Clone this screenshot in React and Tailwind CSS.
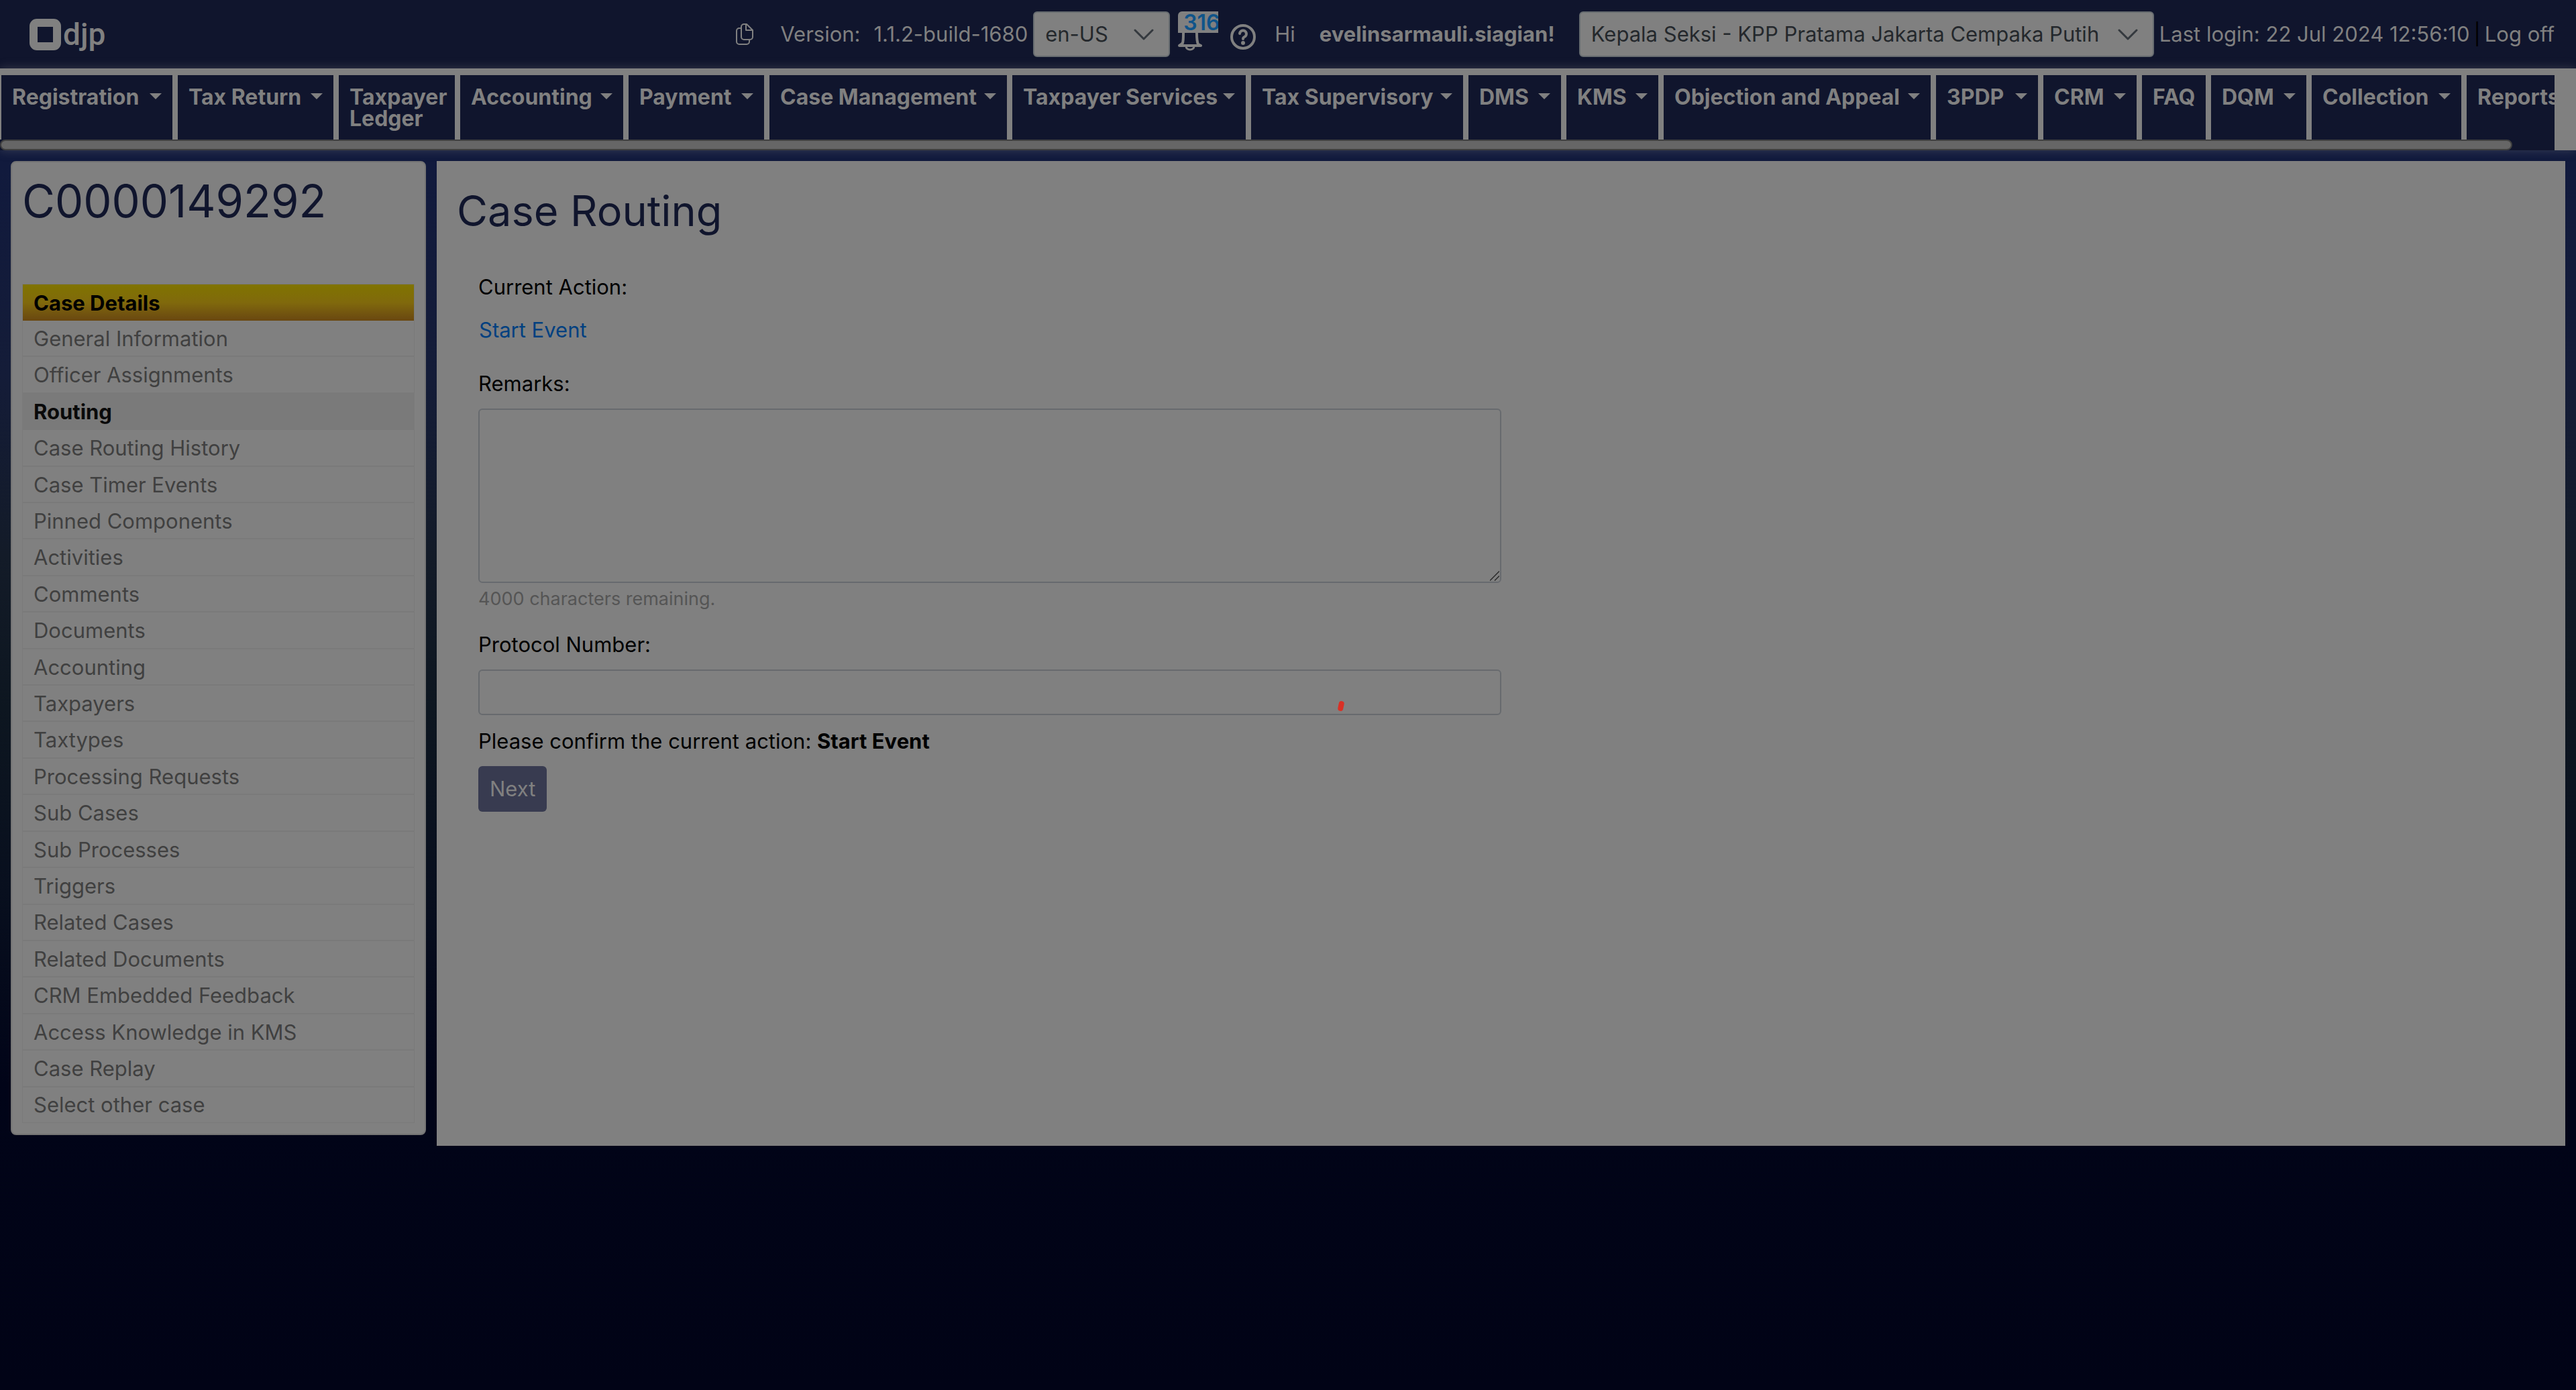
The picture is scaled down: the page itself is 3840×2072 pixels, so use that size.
const NAV = [
  { label: "Registration", width: "w-[255px]", caret: true },
  { label: "Tax Return", width: "w-[232px]", caret: true },
  { label: "Taxpayer Ledger", width: "w-[173px]", caret: false },
  { label: "Accounting", width: "w-[243px]", caret: true },
  { label: "Payment", width: "w-[202px]", caret: true },
  { label: "Case Management", width: "w-[354px]", caret: true },
  { label: "Taxpayer Services", width: "w-[348px]", caret: true },
  { label: "Tax Supervisory", width: "w-[316px]", caret: true },
  { label: "DMS", width: "w-[138px]", caret: true },
  { label: "KMS", width: "w-[137px]", caret: true },
  { label: "Objection and Appeal", width: "w-[398px]", caret: true },
  { label: "3PDP", width: "w-[152px]", caret: true },
  { label: "CRM", width: "w-[139px]", caret: true },
  { label: "FAQ", width: "w-[95px]", caret: false },
  { label: "DQM", width: "w-[142px]", caret: true },
  { label: "Collection", width: "w-[223px]", caret: true },
  { label: "Reports", width: "w-[200px]", caret: true },
];

const MENU = [
  "General Information",
  "Officer Assignments",
  "Routing",
  "Case Routing History",
  "Case Timer Events",
  "Pinned Components",
  "Activities",
  "Comments",
  "Documents",
  "Accounting",
  "Taxpayers",
  "Taxtypes",
  "Processing Requests",
  "Sub Cases",
  "Sub Processes",
  "Triggers",
  "Related Cases",
  "Related Documents",
  "CRM Embedded Feedback",
  "Access Knowledge in KMS",
  "Case Replay",
  "Select other case",
];

function Logo() {
  return (
    <a href="#home" className="flex items-center gap-[3px]" aria-label="djp home">
      <svg width="47" height="47" viewBox="0 0 47 47" aria-hidden="true">
        <path
          fill="#808080"
          fillRule="evenodd"
          d="M11 0H36A11 11 0 0 1 47 11V36A11 11 0 0 1 36 47H11A11 11 0 0 1 0 36V11A11 11 0 0 1 11 0ZM12 12V35H35V12Z"
        />
      </svg>
      <span className="font-['Roboto',sans-serif] text-[46px] font-medium leading-[40px]">djp</span>
    </a>
  );
}

function CopyIcon() {
  return (
    <svg width="26" height="33" viewBox="0 0 26 33" fill="none" stroke="#808080" strokeWidth="2" strokeLinejoin="round" aria-hidden="true">
      <path d="M16 1H12A4 4 0 0 0 8 5V20A4 4 0 0 0 12 24H21A4 4 0 0 0 25 20V10Z" />
      <path d="M15 2V10H25" />
      <path d="M8 7H5A4 4 0 0 0 1 11V27A4 4 0 0 0 5 31H16A4 4 0 0 0 20 27V24" />
    </svg>
  );
}

function BellIcon() {
  return (
    <svg width="36" height="42" viewBox="0 0 36 42" fill="none" stroke="#808080" strokeWidth="4" aria-hidden="true">
      <path d="M7 30C8 26 8 22 8 16A10 10 0 0 1 28 16C28 22 28 27 30 32L34 34H2L5 32Z" strokeLinejoin="round" />
      <path d="M12 35A6 5 0 0 0 24 35" strokeWidth="3" />
    </svg>
  );
}

function HelpIcon() {
  return (
    <svg width="38" height="38" viewBox="0 0 38 38" fill="none" stroke="#808080" aria-hidden="true">
      <circle cx="19" cy="19" r="17" strokeWidth="4" />
      <path d="M14 14A5 5 0 1 1 21 19Q19 20 19 22" strokeWidth="4" strokeLinecap="round" />
      <circle cx="19" cy="28" r="3" fill="#808080" stroke="none" />
    </svg>
  );
}

function Select({ label, value, width }) {
  return (
    <div className={`relative shrink-0 ${width}`}>
      <select
        aria-label={label}
        defaultValue={value}
        className="h-[68px] w-full appearance-none rounded-md border-2 border-[#676c70] bg-[#808080] px-4 text-[31px] text-[#24282c]"
      >
        <option>{value}</option>
      </select>
      <svg
        className="pointer-events-none absolute top-[26px] right-6"
        width="30"
        height="17"
        viewBox="0 0 30 17"
        fill="none"
        stroke="#34393e"
        strokeWidth="3"
        strokeLinecap="round"
        strokeLinejoin="round"
        aria-hidden="true"
      >
        <path d="M2 2L15 15L28 2" />
      </svg>
    </div>
  );
}

function Header() {
  return (
    <header className="flex h-[102px] items-center justify-between bg-[#10152d] pr-8 pl-11 text-[31px] whitespace-nowrap text-[#808080]">
      <Logo />
      <div className="flex items-center">
        <button type="button" aria-label="Copy version">
          <CopyIcon />
        </button>
        <span className="ml-10">Version:</span>
        <span className="mr-2 ml-5">1.1.2-build-1680</span>
        <Select label="Language" value="en-US" width="w-[204px]" />
        <button type="button" aria-label="316 notifications" className="relative ml-3 flex h-[68px] w-[60px] items-center pt-2">
          <BellIcon />
          <span className="absolute top-0 left-0 h-8 w-[60px] overflow-hidden rounded-tl-md bg-[#808080] pl-2 text-left text-[32px] leading-[34px] font-semibold text-[#0f548a]">
            316
          </span>
        </button>
        <button type="button" aria-label="Help" className="mt-2 ml-[18px]">
          <HelpIcon />
        </button>
        <span className="ml-7">Hi</span>
        <a href="#profile" className="mx-9 font-bold">
          evelinsarmauli.siagian!
        </a>
        <Select label="Role" value="Kepala Seksi - KPP Pratama Jakarta Cempaka Putih" width="w-[857px]" />
        <span className="ml-2">Last login: 22 Jul 2024 12:56:10</span>
        <span className="mx-[6px] text-black">|</span>
        <a href="#logoff">Log off</a>
      </div>
    </header>
  );
}

function Nav() {
  return (
    <nav aria-label="Main" className="relative bg-[#808080] pt-[10px] pr-8 shadow-[0_0_14px_rgba(128,128,128,0.35)]">
      <div className="overflow-hidden bg-[#10152d]">
        <ul className="flex h-24 gap-2 bg-[#808080] pl-[2px] text-[32px] leading-8 font-bold text-[#808080]">
          {NAV.map((item) => (
            <li key={item.label} className={`shrink-0 bg-[#10152d] ${item.width}`}>
              <a href={`#${item.label}`} className="flex justify-between px-4 pt-[17px]">
                <span className={item.caret ? "whitespace-nowrap" : ""}>{item.label}</span>
                {item.caret && (
                  <svg className="mt-[10px] shrink-0" width="18" height="9" viewBox="0 0 18 9" aria-hidden="true">
                    <path fill="#808080" d="M0 0H18L9 9Z" />
                  </svg>
                )}
              </a>
            </li>
          ))}
        </ul>
        <div className="h-4">
          <div className="h-4 w-[3745px] max-w-full rounded-full border-2 border-[#404040] bg-[#666666]" />
        </div>
      </div>
    </nav>
  );
}

function Sidebar() {
  return (
    <aside className="w-[619px] shrink-0 rounded-lg border-2 border-[#747474] bg-[#808080] px-[15px] pb-4">
      <h2 className="pt-[23px] text-[67px] leading-[70px] text-[#10152d]">C0000149292</h2>
      <ul className="mt-[88px] flex min-h-[1251px] flex-col border border-[#7a7a7a] text-[31px] text-[#404040]">
        <li className="flex h-[54px] items-center bg-linear-to-b from-[#807400] via-[#80690c] to-[#694710] px-4 pt-[2px] font-bold text-black">
          Case Details
        </li>
        {MENU.map((item) => (
          <li
            key={item}
            className={
              item === "Routing"
                ? "flex flex-1 border-b-2 border-[#7a7a7a] bg-[#7a7a7a] pt-[2px] font-bold text-[#0a0a0a]"
                : "flex flex-1 border-b-2 border-[#7a7a7a] pt-[2px] last:border-b-0"
            }
          >
            <a href={`#${item}`} className="flex flex-1 items-center px-4">
              {item}
            </a>
          </li>
        ))}
      </ul>
    </aside>
  );
}

function RoutingForm() {
  return (
    <main className="flex-1 bg-[#808080] text-[31px] leading-[40px] text-black">
      <h1 className="px-[30px] pt-[38px] text-[63px] leading-[72px] text-[#10152d]">Case Routing</h1>
      <form className="px-[62px] pt-[58px]" onSubmit={(e) => e.preventDefault()}>
        <p>Current Action:</p>
        <a href="#start-event" className="mt-6 ml-[1px] block w-fit text-[#004080]">
          Start Event
        </a>
        <label htmlFor="remarks" className="mt-10 block">
          Remarks:
        </label>
        <div className="relative mt-[17px] w-1/2">
          <textarea id="remarks" className="block h-[260px] w-full resize-none rounded-md border-2 border-[#676a6e] bg-[#808080] p-4" />
          <svg className="pointer-events-none absolute right-[3px] bottom-[3px]" width="14" height="15" viewBox="0 0 14 15" stroke="#2b2b2b" strokeWidth="1.5" aria-hidden="true">
            <path d="M0 14.5L14 0.5M7 14.5L14 7.5" />
          </svg>
        </div>
        <p className="mt-1 text-[27px] text-[#555555]">4000 characters remaining.</p>
        <label htmlFor="protocol" className="mt-7 block">
          Protocol Number:
        </label>
        <div className="relative mt-[17px] w-1/2">
          <input id="protocol" type="text" className="block h-[68px] w-full rounded-md border-2 border-[#676a6e] bg-[#808080] px-4" />
          <span className="absolute right-[235px] bottom-[6px] h-[15px] w-2 rotate-12 rounded-full bg-[#d93025]" />
        </div>
        <p className="mt-[19px]">
          Please confirm the current action: <strong className="font-bold">Start Event</strong>
        </p>
        <button type="submit" className="mt-[17px] h-[68px] rounded-md bg-[#383b50] px-[17px] text-[#808080]">
          Next
        </button>
      </form>
    </main>
  );
}

export default function App() {
  return (
    <div className="min-h-screen bg-[linear-gradient(to_bottom,#111a3d_0%,#111a3d_12%,#141c38_27%,#131b28_40%,#0d1620_51%,#080f1e_64%,#010418_78%,#010316_100%)] font-['Inter','Liberation_Sans',sans-serif]">
      <Header />
      <Nav />
      <div className="flex items-start gap-4 p-4">
        <Sidebar />
        <div className="flex min-h-[1468px] flex-1">
          <RoutingForm />
        </div>
      </div>
    </div>
  );
}
